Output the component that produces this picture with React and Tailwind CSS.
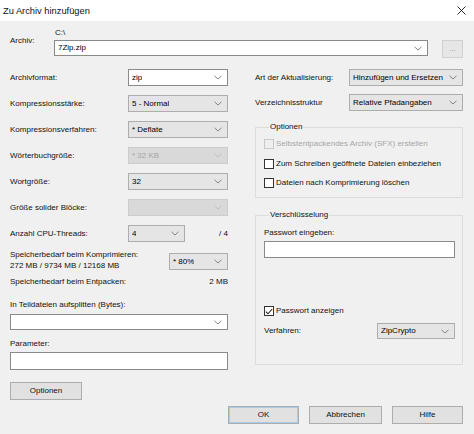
import React from "react";

const Chevron = ({ disabled }) => (
  <svg width="8" height="5" viewBox="0 0 8 5" className="shrink-0">
    <path d="M0.5 0.8 L4 4 L7.5 0.8" fill="none" stroke={disabled ? "#bdbdbd" : "#787878"} strokeWidth="0.9" />
  </svg>
);

const comboStyles = {
  white: "bg-white border-[#8a8a8a] text-black",
  gray: "bg-[#e5e5e5] border-[#adadad] text-black",
  disabled: "bg-[#d9d9d9] border-[#cccccc] text-[#a6a6a6]",
};

const Combo = ({ value = "", className = "", kind = "gray" }) => (
  <div className={`flex items-center justify-between border pl-[3px] pr-[5px] ${comboStyles[kind]} ${className}`}>
    <span className="truncate">{value}</span>
    <Chevron disabled={kind === "disabled"} />
  </div>
);

const Check = ({ label, checked, disabled, className = "" }) => (
  <div className={`flex items-center gap-[2px] h-[10px] ${className}`}>
    <span
      className={`w-[10px] h-[10px] border flex items-center justify-center shrink-0 ${
        disabled ? "border-[#c8c8c8] bg-[#efefef]" : "border-[#333333] bg-white"
      }`}
    >
      {checked && (
        <svg width="8" height="7" viewBox="0 0 8 7">
          <path d="M0.8 3.6 L3 5.8 L7.2 1" fill="none" stroke="#222" strokeWidth="1.1" />
        </svg>
      )}
    </span>
    <span className={disabled ? "text-[#a6a6a6]" : ""}>{label}</span>
  </div>
);

const Button = ({ children, className = "" }) => (
  <div className={`h-[18px] flex items-center justify-center bg-[#e1e1e1] border border-[#adadad] ${className}`}>
    {children}
  </div>
);

const leftRows = [
  { label: "Archivformat:", value: "zip", kind: "white" },
  { label: "Kompressionsstärke:", value: "5 - Normal", kind: "gray" },
  { label: "Kompressionsverfahren:", value: "* Deflate", kind: "gray" },
  { label: "Wörterbuchgröße:", value: "* 32 KB", kind: "disabled" },
  { label: "Wortgröße:", value: "32", kind: "gray" },
  { label: "Größe solider Blöcke:", value: "", kind: "disabled" },
];

export default function App() {
  return (
    <div className="w-[474px] h-[434px] bg-[#f0f0f0] flex flex-col text-[8px] leading-[10px] text-[#111] font-['Liberation_Sans',Arial,sans-serif]">
      {/* title bar */}
      <div className="h-[21px] bg-white flex items-center justify-between pl-[3px] pr-[8px] shrink-0">
        <span className="text-[9.3px]">Zu Archiv hinzufügen</span>
        <svg width="9" height="9" viewBox="0 0 9 9">
          <path d="M0.5 0.5 L8.5 8.5 M8.5 0.5 L0.5 8.5" stroke="#111" strokeWidth="0.9" />
        </svg>
      </div>

      <div className="flex-1 pl-[10px] pr-[11px] pt-[7px]">
        {/* archive path */}
        <div className="flex">
          <div className="w-[44px] pt-[8px]">Archiv:</div>
          <div className="flex-1">
            <div className="pl-[1px]">{"C:\\"}</div>
            <div className="flex items-start mt-[2px]">
              <Combo kind="white" className="w-[374px] h-[16px]" value="7Zip.zip" />
              <div className="ml-auto w-[21px] h-[18px] border border-[#d0d0d0] bg-[#e6e6e6] text-[#9a9a9a] flex items-center justify-center">
                ...
              </div>
            </div>
          </div>
        </div>

        <div className="flex items-start mt-[11px]">
          {/* left column */}
          <div className="w-[218px] flex flex-col">
            <div className="flex flex-col gap-[9px]">
              {leftRows.map((row) => (
                <div key={row.label} className="flex items-center justify-between h-[17px]">
                  <span>{row.label}</span>
                  <Combo kind={row.kind} value={row.value} className="w-[100px] h-[17px]" />
                </div>
              ))}
              <div className="flex items-center h-[17px]">
                <span className="w-[118px]">Anzahl CPU-Threads:</span>
                <Combo value="4" className="w-[57px] h-[17px]" />
                <span className="flex-1 text-right">/ 4</span>
              </div>
            </div>

            <div className="flex justify-between mt-[7px] leading-[11px]">
              <div>
                <div>Speicherbedarf beim Komprimieren:</div>
                <div>272 MB / 9734 MB / 12168 MB</div>
              </div>
              <Combo value="* 80%" className="w-[59px] h-[17px] mt-[4px] leading-[10px]" />
            </div>

            <div className="flex justify-between mt-[6px]">
              <span>Speicherbedarf beim Entpacken:</span>
              <span>2 MB</span>
            </div>

            <div className="mt-[13px]">In Teildateien aufsplitten (Bytes):</div>
            <Combo kind="white" className="w-full h-[16px] mt-[4px]" />

            <div className="mt-[9px]">Parameter:</div>
            <div className="w-full h-[18px] mt-[3px] bg-white border border-[#8a8a8a]" />

            <Button className="w-[72px] mt-[12px]">Optionen</Button>
          </div>

          {/* right column */}
          <div className="w-[208px] ml-auto flex flex-col">
            <div className="flex items-center justify-between h-[17px]">
              <span>Art der Aktualisierung:</span>
              <Combo value="Hinzufügen und Ersetzen" className="w-[114px] h-[17px]" />
            </div>
            <div className="flex items-center justify-between h-[17px] mt-[8px]">
              <span>Verzeichnisstruktur</span>
              <Combo value="Relative Pfadangaben" className="w-[114px] h-[17px]" />
            </div>

            <fieldset className="mt-[11px] border border-[#dcdcdc] pl-[8px] pb-[9px]">
              <legend className="ml-[5px] px-[1px]">Optionen</legend>
              <Check className="mt-[7px]" label="Selbstentpackendes Archiv (SFX) erstellen" disabled />
              <Check className="mt-[10px]" label="Zum Schreiben geöffnete Dateien einbeziehen" />
              <Check className="mt-[9px]" label="Dateien nach Komprimierung löschen" />
            </fieldset>

            <fieldset className="mt-[12px] border border-[#dcdcdc] pl-[8px] pr-[7px] pb-[25px]">
              <legend className="ml-[5px] px-[1px]">Verschlüsselung</legend>
              <div className="mt-[8px]">Passwort eingeben:</div>
              <div className="w-full h-[17px] mt-[3px] bg-white border border-[#8a8a8a]" />
              <Check className="mt-[48px]" label="Passwort anzeigen" checked />
              <div className="flex items-center justify-between h-[16px] mt-[7px]">
                <span>Verfahren:</span>
                <Combo value="ZipCrypto" className="w-[78px] h-[16px]" />
              </div>
            </fieldset>
          </div>
        </div>

        {/* bottom buttons */}
        <div className="flex justify-end gap-[10px] mt-[6px]">
          <Button className="w-[71px] border-[#2f83d6] shadow-[inset_0_0_0_1px_#a9cbeb]">OK</Button>
          <Button className="w-[73px]">Abbrechen</Button>
          <Button className="w-[71px]">Hilfe</Button>
        </div>
      </div>
    </div>
  );
}
